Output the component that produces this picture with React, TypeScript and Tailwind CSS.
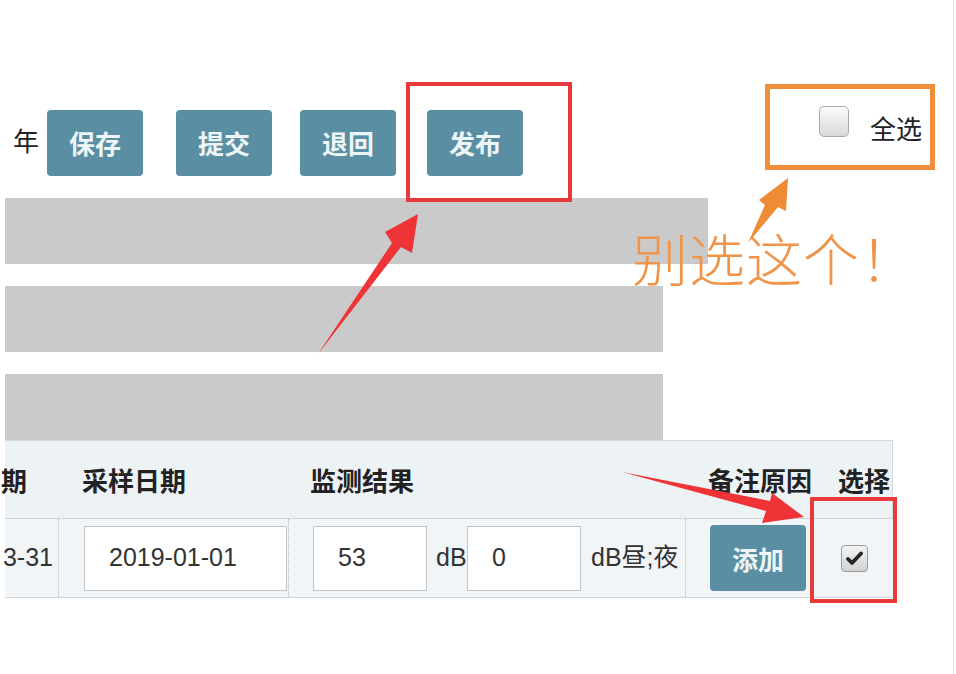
import React from "react"

const CJK = "font-['Noto_Sans_CJK_SC',sans-serif]"
const LATIN = "font-['Liberation_Sans','Noto_Sans_CJK_SC',sans-serif]"

function ActionButton({ label, className = "" }: { label: string; className?: string }) {
  return (
    <button
      className={`flex h-[66px] w-[96px] shrink-0 items-center justify-center rounded-[4px] bg-[#598ea3] text-[26px] font-bold leading-none text-[#eef5f7] ${className}`}
    >
      {label}
    </button>
  )
}

function TextInput({ value, width }: { value: string; width: string }) {
  return (
    <div
      className={`flex h-[65px] shrink-0 items-center border border-[#bfc4c8] bg-white pl-[24px] text-[25px] text-[#333] ${width}`}
    >
      {value}
    </div>
  )
}

function CheckBox({ checked }: { checked?: boolean }) {
  if (checked) {
    return (
      <span className="flex h-[27px] w-[27px] items-center justify-center rounded-[4px] border border-[#9c9c9c] bg-linear-to-b from-[#f4f4f4] to-[#d2d2d2]">
        <svg width="17" height="15" viewBox="0 0 17 15">
          <path d="M2 8 L6 12 L15 2.5" fill="none" stroke="#262626" strokeWidth="3.8" strokeLinecap="round" strokeLinejoin="round" />
        </svg>
      </span>
    )
  }
  return (
    <span className="block h-[31px] w-[30px] rounded-[5px] border border-[#a8a8a8] bg-linear-to-b from-[#fbfbfb] to-[#d9d9d9]" />
  )
}

export default function App() {
  return (
    <div className={`relative h-[674px] w-[956px] overflow-hidden bg-white text-[#222] ${CJK}`}>
      <div className="h-full w-[954px] border-r border-[#e2e2e2]">
        {/* toolbar */}
        <div className="flex items-start pl-[13px] pt-[110px]">
          <span className="mt-[17px] text-[26px] leading-none">年</span>
          <ActionButton label="保存" className="ml-[8px]" />
          <ActionButton label="提交" className="ml-[33px]" />
          <ActionButton label="退回" className="ml-[28px]" />
          <ActionButton label="发布" className="ml-[31px]" />
          <div className="ml-[296px] mt-[-4px] flex items-start">
            <CheckBox />
            <span className="ml-[21px] mt-[9px] text-[26px] leading-none">全选</span>
          </div>
        </div>

        {/* redacted rows */}
        <div className="ml-[5px] mt-[22px] flex flex-col gap-[22px]">
          <div className="h-[66px] w-[703px] bg-[#cacaca]" />
          <div className="h-[66px] w-[658px] bg-[#cacaca]" />
          <div className="h-[66px] w-[658px] bg-[#cacaca]" />
        </div>

        {/* table */}
        <div className="w-[893px] pl-[5px]">
          <div className="flex h-[78px] items-center border-t border-r border-[#d2d8dd] bg-[#edf2f5] text-[26px] font-bold leading-none">
            <span className="ml-[-4px] w-[81px] shrink-0">期</span>
            <span className="w-[228px] shrink-0">采样日期</span>
            <span className="w-[398px] shrink-0">监测结果</span>
            <span className="w-[130px] shrink-0">备注原因</span>
            <span className="shrink-0">选择</span>
          </div>
          <div className={`flex h-[80px] border-y border-[#cfd5da] bg-[#f2f5f8] text-[25px] text-[#333] ${LATIN}`}>
            <div className="flex w-[54px] shrink-0 items-center justify-end whitespace-nowrap border-r border-dotted border-[#b9b9b9] pr-[5px]">
              3-31
            </div>
            <div className="flex w-[230px] shrink-0 items-center border-r border-dotted border-[#b9b9b9] pl-[25px]">
              <TextInput value="2019-01-01" width="w-[203px]" />
            </div>
            <div className="flex w-[397px] shrink-0 items-center border-r border-dotted border-[#b9b9b9] pl-[24px]">
              <TextInput value="53" width="w-[114px]" />
              <span className="ml-[9px] w-[31px]">dB</span>
              <TextInput value="0" width="w-[114px]" />
              <span className="ml-[10px] whitespace-nowrap">dB昼;夜</span>
            </div>
            <div className="flex w-[124px] shrink-0 items-center pl-[24px]">
              <button className={`flex h-[66px] w-[96px] items-center justify-center rounded-[4px] bg-[#598ea3] text-[26px] font-bold text-[#eef5f7] ${CJK}`}>
                添加
              </button>
            </div>
            <div className="flex flex-1 items-center pl-[31px]">
              <CheckBox checked />
            </div>
          </div>
        </div>
      </div>

      {/* annotations */}
      <div className="absolute left-[406px] top-[82px] h-[120px] w-[166px] border-4 border-[#e83a3b]" />
      <div className="absolute left-[765px] top-[84px] h-[86px] w-[170px] border-[5px] border-[#ef8f3c]" />
      <div className="absolute left-[810px] top-[497px] h-[106px] w-[87px] border-4 border-[#e83a3b]" />
      <span className="absolute left-[632px] top-[229px] text-[56px] font-light leading-none tracking-[1px] text-[#ef9448]">
        别选这个！
      </span>
      <svg className="pointer-events-none absolute left-0 top-0" width="956" height="674" viewBox="0 0 956 674">
        <polygon points="318,354 392,243 385,232 418,214 412,253 401,247" fill="#ee3436" />
        <polygon points="748,243 765,205 759,200 788,178 786,211 778,207" fill="#ef8a35" />
        <polygon points="622,472 770,501 772,493 804,517 762,523 766,511" fill="#ee3436" />
      </svg>
    </div>
  )
}
